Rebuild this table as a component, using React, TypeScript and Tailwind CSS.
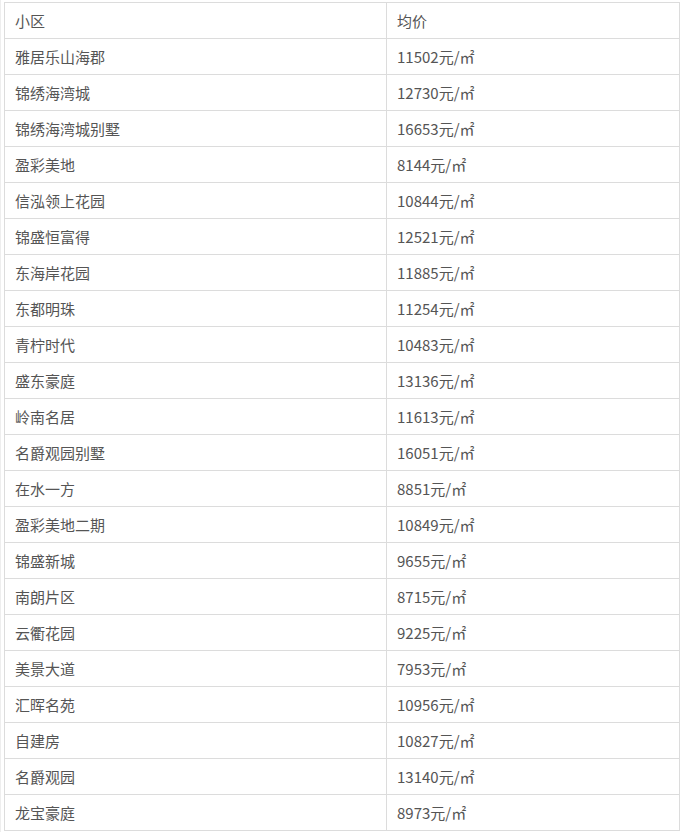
const rows: [string, string][] = [
  ["雅居乐山海郡", "11502"],
  ["锦绣海湾城", "12730"],
  ["锦绣海湾城别墅", "16653"],
  ["盈彩美地", "8144"],
  ["信泓领上花园", "10844"],
  ["锦盛恒富得", "12521"],
  ["东海岸花园", "11885"],
  ["东都明珠", "11254"],
  ["青柠时代", "10483"],
  ["盛东豪庭", "13136"],
  ["岭南名居", "11613"],
  ["名爵观园别墅", "16051"],
  ["在水一方", "8851"],
  ["盈彩美地二期", "10849"],
  ["锦盛新城", "9655"],
  ["南朗片区", "8715"],
  ["云衢花园", "9225"],
  ["美景大道", "7953"],
  ["汇晖名苑", "10956"],
  ["自建房", "10827"],
  ["名爵观园", "13140"],
  ["龙宝豪庭", "8973"],
];

export default function App() {
  return (
    <div
      className="w-[682px] h-[832px] bg-white pt-[2px] pl-[3px] border-l border-[#eeeeee] text-[#555] text-[15px]"
      style={{ fontFamily: '"Noto Sans CJK SC", "Noto Sans", sans-serif' }}
    >
      <table className="w-[676px] border-collapse table-fixed">
        <colgroup>
          <col className="w-[382px]" />
          <col />
        </colgroup>
        <tbody>
          <tr className="h-[36px]">
            <td className="border border-[#dcdcdc] pl-[10px] align-middle leading-none">小区</td>
            <td className="border border-[#dcdcdc] pl-[10px] align-middle leading-none">均价</td>
          </tr>
          {rows.map(([name, price]) => (
            <tr key={name} className="h-[36px]">
              <td className="border border-[#dcdcdc] pl-[10px] align-middle leading-none">{name}</td>
              <td className="border border-[#dcdcdc] pl-[10px] align-middle leading-none">
                {price}元/㎡
              </td>
            </tr>
          ))}
        </tbody>
      </table>
    </div>
  );
}
